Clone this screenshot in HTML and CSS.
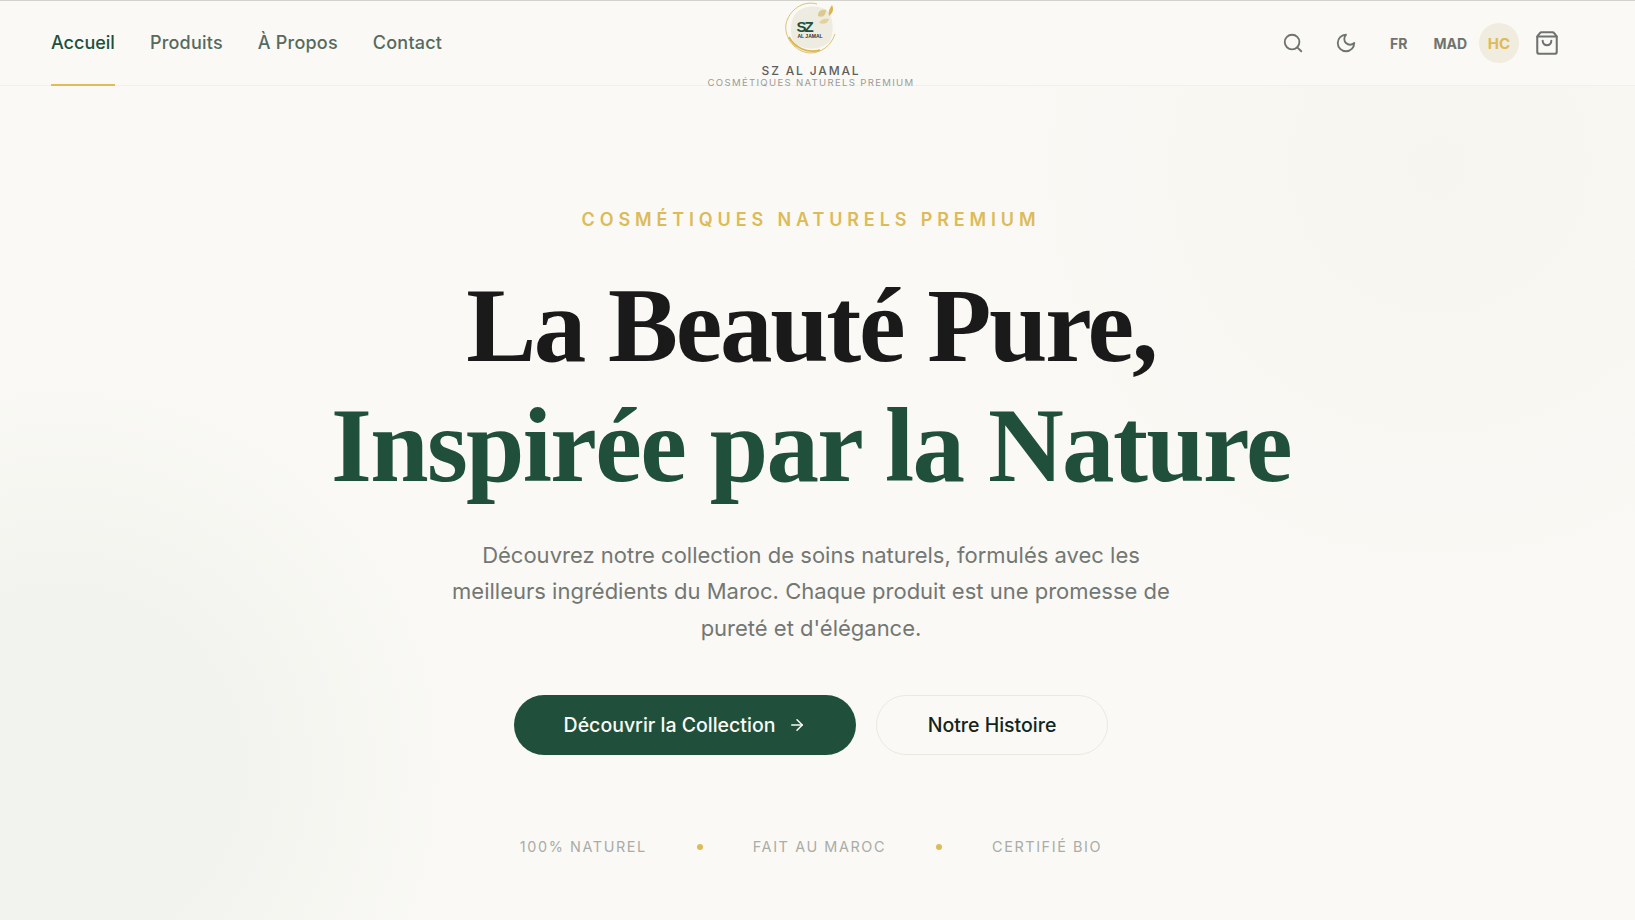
FILE: index.html
```html
<!DOCTYPE html>
<html lang="fr">
<head>
    <meta charset="UTF-8">
    <meta name="viewport" content="width=device-width, initial-scale=1.0">
    <title>SZ Al Jamal</title>
    <link rel="stylesheet" href="styles.css">
</head>
<body>
    <header class="site-header">
        <nav class="main-nav">
            <a class="nav-link active" href="#">Accueil</a>
            <a class="nav-link" href="#">Produits</a>
            <a class="nav-link" href="#">À Propos</a>
            <a class="nav-link" href="#">Contact</a>
        </nav>

        <a class="brand" href="#">
            <svg class="brand-logo" viewBox="0 0 54 54" aria-hidden="true">
                <path d="M12 12 C20 4 34 4 43 9 C50 16 50 32 46 40 C38 50 18 50 10 41 C5 32 6 19 12 12Z" fill="#eeebe0"/>
                <path d="M33 3 C19 -1 5 9 2 23 C0 37 11 51 26 52 C37 52 47 45 51 33" fill="none" stroke="#dcc173" stroke-width="1"/>
                <path d="M5 36 C10 46 23 53 36 49" fill="none" stroke="#d9b650" stroke-width="1.8"/>
                <path d="M34 15 C34 10 37 8 42 9 C42 14 39 17 34 15Z" fill="#dcc98c"/>
                <path d="M35 22 C37 18 41 17 45 18 C44 22 40 24 35 22Z" fill="#e3d29a"/>
                <path d="M45 15 C44 10 46 7 48 4 C50 8 49 12 45 15Z" fill="#d9b650"/>
                <text class="logo-sz" x="20" y="31">SZ</text>
                <text class="logo-name" x="26" y="37">AL JAMAL</text>
            </svg>
            <span class="brand-name">SZ AL JAMAL</span>
            <span class="brand-tag">COSMÉTIQUES NATURELS PREMIUM</span>
        </a>

        <div class="actions">
            <button class="icon-btn" aria-label="Rechercher">
                <svg viewBox="0 0 24 24"><circle cx="11" cy="11" r="8"/><path d="m21 21-4.3-4.3"/></svg>
            </button>
            <button class="icon-btn" aria-label="Mode sombre">
                <svg viewBox="0 0 24 24"><path d="M12 3a6 6 0 0 0 9 9 9 9 0 1 1-9-9Z"/></svg>
            </button>
            <button class="text-btn lang-btn">FR</button>
            <button class="text-btn cur-btn">MAD</button>
            <button class="avatar">HC</button>
            <button class="icon-btn bag-btn" aria-label="Panier">
                <svg viewBox="0 0 24 24"><path d="M3.4 5.467a2 2 0 0 0-.4 1.2V20a2 2 0 0 0 2 2h14a2 2 0 0 0 2-2V6.667a2 2 0 0 0-.4-1.2l-2-2.667A2 2 0 0 0 17 2H7a2 2 0 0 0-1.6.8z"/><path d="M3.103 6.034h17.794"/><path d="M16 10a4 4 0 0 1-8 0"/></svg>
            </button>
        </div>
    </header>

    <main class="hero">
        <p class="eyebrow">COSMÉTIQUES NATURELS PREMIUM</p>
        <h1 class="hero-title">
            <span class="title-line">La Beauté Pure,</span>
            <span class="title-line green">Inspirée par la Nature</span>
        </h1>
        <p class="hero-text">Découvrez notre collection de soins naturels, formulés avec les meilleurs ingrédients du Maroc. Chaque produit est une promesse de pureté et d'élégance.</p>

        <div class="hero-buttons">
            <a class="btn btn-primary" href="#">
                Découvrir la Collection
                <svg viewBox="0 0 24 24"><path d="M5 12h14"/><path d="m12 5 7 7-7 7"/></svg>
            </a>
            <a class="btn btn-outline" href="#">Notre Histoire</a>
        </div>

        <ul class="badges">
            <li>100% NATUREL</li>
            <li class="dot"></li>
            <li>FAIT AU MAROC</li>
            <li class="dot"></li>
            <li>CERTIFIÉ BIO</li>
        </ul>
    </main>
</body>
</html>
```

FILE: styles.css
```css
* {
    margin: 0;
    padding: 0;
    box-sizing: border-box;
}

html, body {
    height: 100%;
}

body {
    font-family: Inter, "Liberation Sans", sans-serif;
    color: #1a1a1a;
    overflow: hidden;
    background-color: #faf9f5;
    background-image:
        radial-gradient(circle 400px at 60px 770px, #f2f3ee 0, #f2f3ee 45%, rgba(242, 243, 238, 0) 100%),
        radial-gradient(circle 480px at 88% 18%, #f6f5ef 0, rgba(246, 245, 239, 0) 100%);
}

a {
    color: inherit;
    text-decoration: none;
}

button {
    background: none;
    border: none;
    font-family: inherit;
    cursor: pointer;
}

/* header */
.site-header {
    height: 86px;
    display: grid;
    grid-template-columns: 1fr auto 1fr;
    padding: 0 64px 0 51px;
    background-color: #faf9f5;
    border-top: 1px solid #d2d1cb;
    border-bottom: 1px solid #f1f0ea;
}

.main-nav {
    display: flex;
    gap: 35px;
}

.nav-link {
    display: flex;
    align-items: center;
    height: 85px;
    padding-bottom: 1px;
    font-size: 18px;
    font-weight: 450;
    letter-spacing: 0.012em;
    color: #566a5e;
    border-bottom: 2px solid transparent;
}

.nav-link.active {
    font-weight: 500;
    letter-spacing: 0;
    color: #20503c;
    border-bottom-color: #dfbd5d;
}

.brand {
    display: flex;
    flex-direction: column;
    align-items: center;
    height: 85px;
}

.brand > * {
    flex-shrink: 0;
}

.brand-logo {
    width: 54px;
    height: 54px;
    margin-bottom: 9px;
}

.logo-sz {
    font-family: "Liberation Sans", sans-serif;
    font-size: 15px;
    font-weight: 700;
    letter-spacing: -2px;
    fill: #20503c;
    text-anchor: middle;
}

.logo-name {
    font-family: "Liberation Sans", sans-serif;
    font-size: 5px;
    font-weight: 700;
    fill: #333;
    text-anchor: middle;
}

.brand-name {
    font-size: 12px;
    font-weight: 500;
    line-height: 13px;
    letter-spacing: 1.85px;
    color: #5c5f5c;
}

.brand-tag {
    font-size: 9.6px;
    line-height: 12px;
    letter-spacing: 1.3px;
    color: #9a9c97;
}

.actions {
    display: flex;
    align-items: center;
    justify-content: flex-end;
    height: 84px;
    padding-right: 4px;
}

.icon-btn {
    display: flex;
    align-items: center;
    justify-content: center;
    width: 40px;
    height: 40px;
}

.icon-btn svg {
    width: 22px;
    height: 22px;
    fill: none;
    stroke: #6f736f;
    stroke-width: 2;
    stroke-linecap: round;
    stroke-linejoin: round;
}

.icon-btn + .icon-btn {
    margin-left: 13px;
}

.text-btn {
    font-size: 14px;
    font-weight: 700;
    color: #6f736f;
}

.lang-btn {
    margin-left: 24px;
}

.cur-btn {
    margin-left: 26px;
}

.avatar {
    width: 40px;
    height: 40px;
    margin-left: 12px;
    border-radius: 50%;
    background-color: #f0ecdf;
    color: #dcbb58;
    font-size: 15px;
    font-weight: 700;
}

.bag-btn {
    margin-left: 8px;
}

.bag-btn svg {
    width: 26px;
    height: 26px;
    stroke-width: 1.9;
}

/* hero */
.hero {
    display: flex;
    flex-direction: column;
    align-items: center;
    padding: 123px 13px 0 0;
    text-align: center;
}

.eyebrow {
    font-size: 18px;
    font-weight: 600;
    line-height: 22px;
    letter-spacing: 4.87px;
    color: #dcbb58;
    margin-bottom: 35px;
}

.hero-title {
    font-family: "Liberation Serif", serif;
    font-size: 105px;
    font-weight: 700;
    line-height: 120px;
    letter-spacing: -2.3px;
    color: #1a1a1a;
    margin-bottom: 31px;
}

.title-line {
    display: block;
}

.title-line.green {
    letter-spacing: -1.66px;
    color: #20503c;
}

.hero-text {
    width: 740px;
    font-size: 22px;
    line-height: 36.4px;
    color: #737773;
    margin-bottom: 49px;
}

.hero-buttons {
    display: flex;
    gap: 20px;
    margin-bottom: 83px;
}

.btn {
    display: flex;
    align-items: center;
    justify-content: center;
    height: 60px;
    border-radius: 30px;
    font-size: 19.5px;
    font-weight: 500;
}

.btn svg {
    width: 18px;
    height: 18px;
    margin-left: 13px;
    fill: none;
    stroke: currentColor;
    stroke-width: 2;
    stroke-linecap: round;
    stroke-linejoin: round;
}

.btn-primary {
    width: 342px;
    background-color: #20503c;
    color: #faf9f5;
}

.btn-outline {
    width: 232px;
    border: 1px solid #ebe9df;
    color: #14241c;
}

.badges {
    display: flex;
    align-items: center;
    gap: 50px;
    list-style: none;
    font-size: 14.4px;
    letter-spacing: 1.6px;
    color: #a9aca7;
}

.dot {
    width: 6px;
    height: 6px;
    border-radius: 50%;
    background-color: #dcbb58;
}
```
